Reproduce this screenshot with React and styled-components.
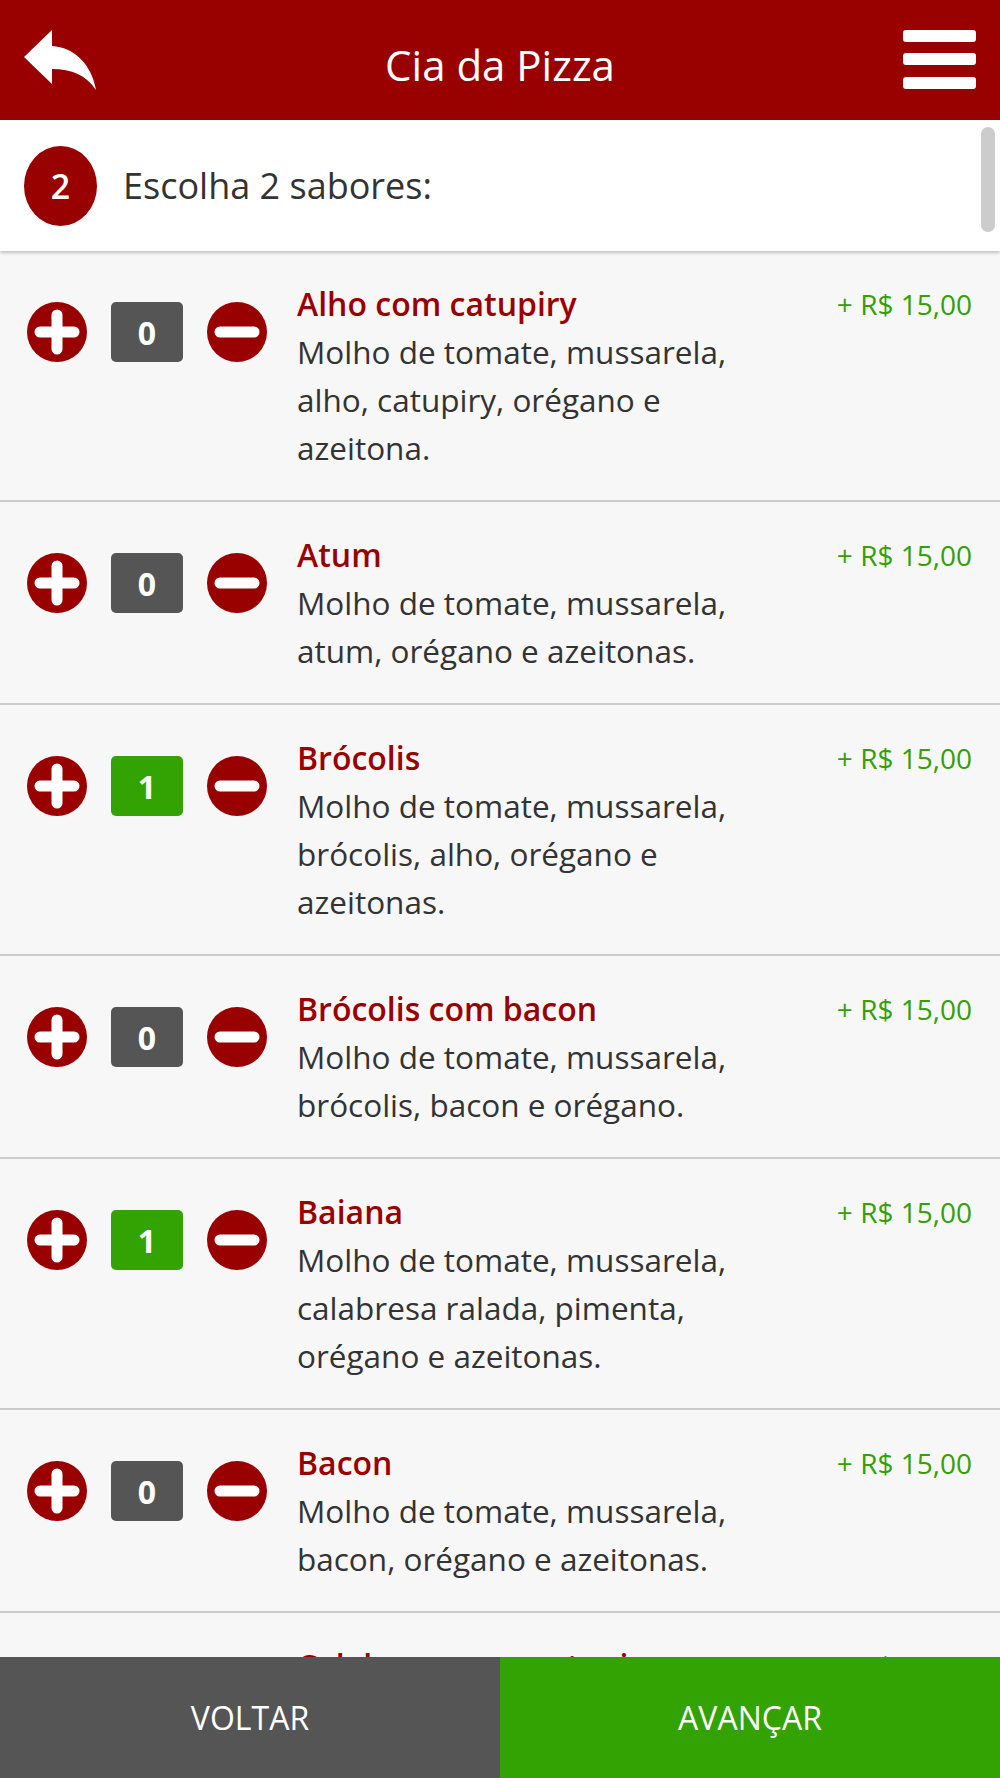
import styled, { createGlobalStyle } from 'styled-components';

const GlobalStyle = createGlobalStyle`
    html, body {
        margin: 0;
        padding: 0;
    }
    body {
        font-family: 'Open Sans', 'Noto Sans', sans-serif;
        background: #f7f7f7;
        color: #333;
    }
`;

const Page = styled.div`
    height: 100vh;
    display: flex;
    flex-direction: column;
    overflow: hidden;
`;

const Header = styled.header`
    flex: 0 0 120px;
    background: #990000;
    display: flex;
    align-items: center;
    justify-content: space-between;
    padding: 0 24px;
    box-sizing: border-box;

    h1 {
        margin: 0;
        padding-top: 10px;
        font-size: 42px;
        font-weight: 400;
        color: white;
        line-height: 1;
    }
`;

const IconButton = styled.button`
    border: none;
    background: none;
    padding: 0;
    width: 73px;
    height: 60px;
    display: block;
`;

const Step = styled.div`
    position: relative;
    z-index: 2;
    flex: 0 0 131px;
    background: white;
    box-shadow: rgba(0, 0, 0, 0.22) 0px 2px 3px;
    display: flex;
    align-items: center;
    gap: 26px;
    padding: 0 24px;
    box-sizing: border-box;

    p {
        margin: 0;
        font-size: 36px;
        color: #333;
    }
`;

const StepNumber = styled.div`
    width: 73px;
    height: 80px;
    border-radius: 50%;
    background: #990000;
    color: white;
    font-size: 34px;
    font-weight: 600;
    display: flex;
    align-items: center;
    justify-content: center;
`;

const Scrollbar = styled.div`
    position: absolute;
    top: 7px;
    right: 5px;
    width: 14px;
    height: 105px;
    border-radius: 7px;
    background: #cccccc;
`;

const List = styled.div`
    flex: 1;
    overflow: hidden;
`;

const Row = styled.div`
    display: flex;
    align-items: flex-start;
    padding: 29px 28px 28px 27px;
    border-bottom: 2px solid #cccccc;
`;

const Controls = styled.div`
    display: flex;
    align-items: center;
    gap: 24px;
    margin-top: 22px;
`;

const Counter = styled.span`
    width: 72px;
    height: 60px;
    border-radius: 5px;
    background: ${p => (p.$active ? '#33a303' : '#555555')};
    color: white;
    font-size: 32px;
    font-weight: 700;
    display: flex;
    align-items: center;
    justify-content: center;
`;

const Info = styled.div`
    flex: 0 0 470px;
    margin-left: 30px;
    font-size: 31.5px;
    line-height: 48px;

    h3 {
        margin: 0;
        font-size: 32px;
        font-weight: 600;
        color: #990000;
    }

    p {
        margin: 0;
        color: #333;
    }
`;

const Price = styled.span`
    margin-left: auto;
    white-space: nowrap;
    font-size: 28px;
    line-height: 48px;
    color: #33a003;
`;

const Footer = styled.div`
    flex: 0 0 121px;
    display: grid;
    grid-template-columns: 1fr 1fr;
`;

const FooterButton = styled.button`
    border: none;
    font-family: 'Open Sans', sans-serif;
    font-size: 32px;
    font-weight: 500;
    text-transform: uppercase;
    color: white;
    background: ${p => (p.$primary ? '#33a303' : '#555555')};
`;

const ReplyIcon = () => (
    <svg width="73" height="60" viewBox="0 0 73 60">
        <path d="M0 27 L28 0 L28 16 C50 17 68 35 72 60 C62 45 48 39 28 39 L28 54 Z" fill="white" />
    </svg>
);

const MenuIcon = () => (
    <svg width="73" height="60" viewBox="0 0 73 60">
        <rect x="0" y="0" width="73" height="12" rx="3" fill="white" />
        <rect x="0" y="23" width="73" height="12" rx="3" fill="white" />
        <rect x="0" y="47" width="73" height="12" rx="3" fill="white" />
    </svg>
);

const RoundButton = ({ minus }) => (
    <svg width="60" height="60" viewBox="0 0 60 60">
        <circle cx="30" cy="30" r="30" fill="#990000" />
        <line x1="13" y1="30" x2="47" y2="30" stroke="white" strokeWidth="11" strokeLinecap="round" />
        {!minus && <line x1="30" y1="13" x2="30" y2="47" stroke="white" strokeWidth="11" strokeLinecap="round" />}
    </svg>
);

const flavors = [
    { name: 'Alho com catupiry', desc: 'Molho de tomate, mussarela, alho, catupiry, orégano e azeitona.', qty: 0 },
    { name: 'Atum', desc: 'Molho de tomate, mussarela, atum, orégano e azeitonas.', qty: 0 },
    { name: 'Brócolis', desc: 'Molho de tomate, mussarela, brócolis, alho, orégano e azeitonas.', qty: 1 },
    { name: 'Brócolis com bacon', desc: 'Molho de tomate, mussarela, brócolis, bacon e orégano.', qty: 0 },
    { name: 'Baiana', desc: 'Molho de tomate, mussarela, calabresa ralada, pimenta, orégano e azeitonas.', qty: 1 },
    { name: 'Bacon', desc: 'Molho de tomate, mussarela, bacon, orégano e azeitonas.', qty: 0 },
    { name: 'Calabresa com catupiry', desc: 'Molho de tomate, mussarela, calabresa, catupiry, orégano e azeitonas.', qty: 0 },
];

const App = () => {
    return (
        <Page>
            <GlobalStyle />
            <Header>
                <IconButton><ReplyIcon /></IconButton>
                <h1>Cia da Pizza</h1>
                <IconButton><MenuIcon /></IconButton>
            </Header>
            <Step>
                <StepNumber>2</StepNumber>
                <p>Escolha 2 sabores:</p>
                <Scrollbar />
            </Step>
            <List>
                {flavors.map(f => (
                    <Row key={f.name}>
                        <Controls>
                            <RoundButton />
                            <Counter $active={f.qty > 0}>{f.qty}</Counter>
                            <RoundButton minus />
                        </Controls>
                        <Info>
                            <h3>{f.name}</h3>
                            <p>{f.desc}</p>
                        </Info>
                        <Price>+ R$ 15,00</Price>
                    </Row>
                ))}
            </List>
            <Footer>
                <FooterButton>Voltar</FooterButton>
                <FooterButton $primary>Avançar</FooterButton>
            </Footer>
        </Page>
    );
}

export default App;
